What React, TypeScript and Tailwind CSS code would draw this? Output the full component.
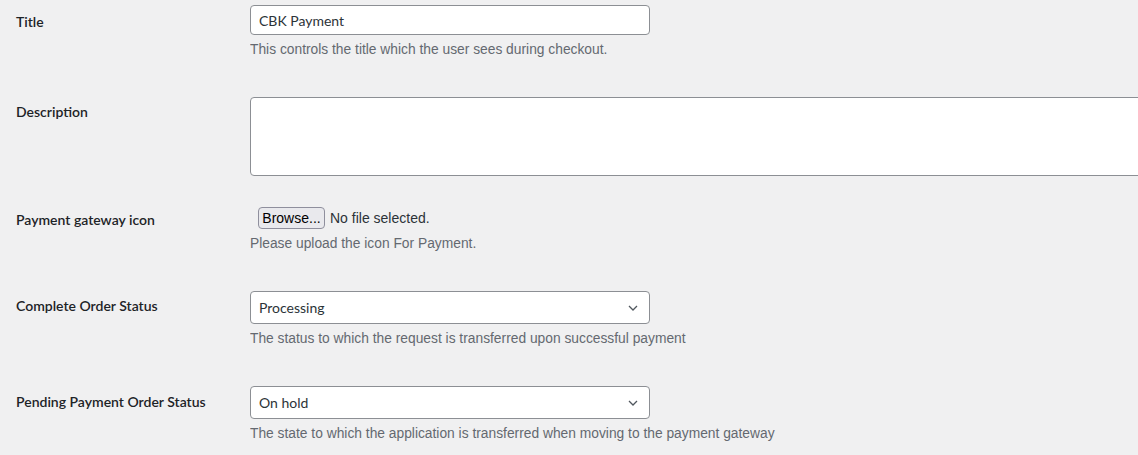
const font = { fontFamily: '"Liberation Sans", Arial, sans-serif' };
const lato = { fontFamily: 'Lato, "Liberation Sans", sans-serif' };

function Chevron() {
  return (
    <svg width="16" height="16" viewBox="0 0 20 20" className="absolute right-[8px] top-1/2 -translate-y-1/2">
      <path d="M5 7.5 L10 12.5 L15 7.5" fill="none" stroke="#50575e" strokeWidth="1.6" />
    </svg>
  );
}

function Row({
  label,
  pt,
  h,
  children,
}: {
  label: string;
  pt: string;
  h: string;
  children: React.ReactNode;
}) {
  return (
    <div className={`flex ${h}`}>
      <div className={`w-[250px] shrink-0 pl-[16px] ${pt}`}>
        <span className="text-[14px] font-semibold leading-[18px] text-[#1d2327]" style={lato}>
          {label}
        </span>
      </div>
      <div className="min-w-0 flex-1 overflow-hidden">{children}</div>
    </div>
  );
}

function Desc({ children }: { children: React.ReactNode }) {
  return <p className="mt-[5px] whitespace-nowrap text-[13.8px] leading-[19px] text-[#646970]">{children}</p>;
}

function Select({ value }: { value: string }) {
  return (
    <div
      className="relative flex h-[33px] w-[400px] items-center rounded-[4px] border border-[#8c8f94] bg-white pl-[8px] text-[14px] text-[#2c3338]"
      style={lato}
    >
      {value}
      <Chevron />
    </div>
  );
}

export default function App() {
  return (
    <div className="h-[455px] w-[1138px] overflow-hidden bg-[#f0f0f1]" style={font}>
      <Row label="Title" pt="pt-[10px]" h="h-[82px]">
        <div className="pt-[5px]">
          <div
            className="flex h-[30px] w-[400px] items-center rounded-[4px] border border-[#8c8f94] bg-white pl-[8px] text-[14px] text-[#2c3338]"
            style={lato}
          >
            CBK Payment
          </div>
          <Desc>This controls the title which the user sees during checkout.</Desc>
        </div>
      </Row>
      <Row label="Description" pt="pt-[18px]" h="h-[109px]">
        <div className="pt-[15px]">
          <div className="h-[79px] w-[920px] rounded-[4px] border border-[#8c8f94] bg-white" />
        </div>
      </Row>
      <Row label="Payment gateway icon" pt="pt-[17px]" h="h-[85px]">
        <div className="pt-[16px]">
          <div className="flex items-center pl-[8px]">
            <div className="flex h-[22px] w-[67px] items-center justify-center rounded-[4px] border border-[#8f8f9d] bg-[#e9e9ed] text-[14px] text-black">
              Browse...
            </div>
            <span className="ml-[5px] text-[14px] text-[#2c3338]">No file selected.</span>
          </div>
          <Desc>Please upload the icon For Payment.</Desc>
        </div>
      </Row>
      <Row label="Complete Order Status" pt="pt-[18px]" h="h-[96px]">
        <div className="pt-[15px]">
          <Select value="Processing" />
          <Desc>The status to which the request is transferred upon successful payment</Desc>
        </div>
      </Row>
      <Row label="Pending Payment Order Status" pt="pt-[18px]" h="h-[96px]">
        <div className="pt-[14px]">
          <Select value="On hold" />
          <Desc>The state to which the application is transferred when moving to the payment gateway</Desc>
        </div>
      </Row>
    </div>
  );
}
